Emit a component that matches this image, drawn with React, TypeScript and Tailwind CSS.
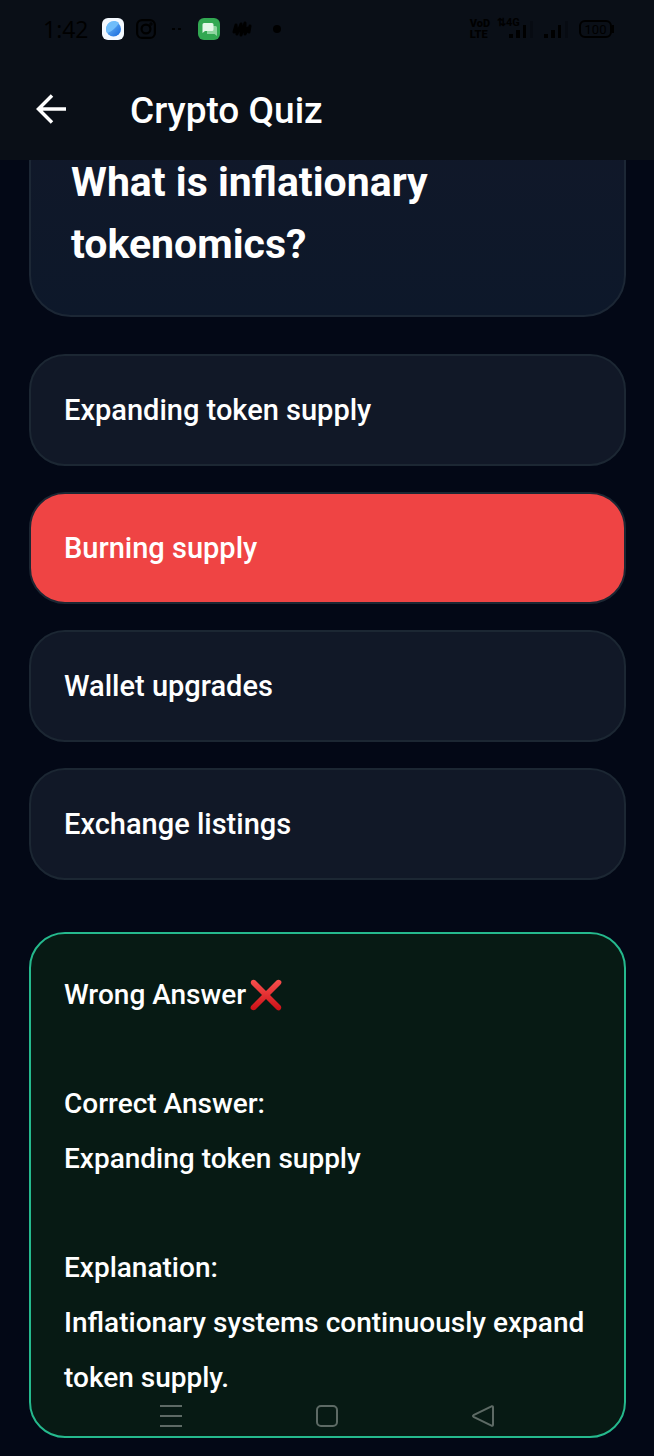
import { useState } from "react";

type Option = {
  id: number;
  label: string;
};

const options: Option[] = [
  { id: 1, label: "Expanding token supply" },
  { id: 2, label: "Burning supply" },
  { id: 3, label: "Wallet upgrades" },
  { id: 4, label: "Exchange listings" },
];

const CORRECT_ID = 1;

const SignalBars = () => (
  <svg width="25" height="18" viewBox="0 0 25 18" aria-hidden="true">
    <path d="M0 14h4v4H0zM7 10h4v8H7zM14 5h3v13h-3z" fill="#000" />
    <path d="M21 1h3v17h-3z" fill="#070b12" />
  </svg>
);

function StatusBar() {
  return (
    <div className="flex h-[58px] items-center justify-between pl-[43px] pr-10 text-black">
      <div className="flex items-center">
        <span className="w-[59px] font-['Open_Sans',sans-serif] text-[23px] leading-none">
          1:42
        </span>
        <svg width="22" height="22" viewBox="0 0 22 22" aria-hidden="true">
          <defs>
            <linearGradient id="browser" x1="0" y1="0" x2="1" y2="1">
              <stop offset="0" stopColor="#7cc4fb" />
              <stop offset="1" stopColor="#1467dc" />
            </linearGradient>
          </defs>
          <rect width="22" height="22" rx="6" fill="#f4f9ff" />
          <circle cx="11.500" cy="11" r="7.500" fill="url(#browser)" />
          <path d="M4 12C4 3 13 1 17 5c-3 5-8 9-12 10z" fill="#6fbdfa" />
        </svg>
        <svg
          className="ml-3"
          width="20"
          height="20"
          viewBox="0 0 18 18"
          fill="none"
          stroke="#000"
          strokeWidth="2"
          aria-hidden="true"
        >
          <rect x="1" y="1" width="16" height="16" rx="4.500" />
          <circle cx="9" cy="9" r="4" />
          <circle cx="13.500" cy="4.500" r="0.500" />
        </svg>
        <svg className="ml-4" width="10" height="4" aria-hidden="true">
          <path d="M0 1h3v2H0zM6 1h3v2H6z" fill="#000" />
        </svg>
        <svg
          className="ml-4"
          width="22"
          height="22"
          viewBox="0 0 22 22"
          aria-hidden="true"
        >
          <rect width="22" height="22" rx="6" fill="#32a852" />
          <path
            d="M9 8h8.500a1.500 1.500 0 0 1 1.500 1.500V18l-2.500-2H9z"
            fill="#8ed6a0"
          />
          <path
            d="M6 5h8a1.500 1.500 0 0 1 1.500 1.500v5A1.500 1.500 0 0 1 14 13H7l-2.500 2V6.500A1.500 1.500 0 0 1 6 5z"
            fill="#e3f7e8"
          />
        </svg>
        <svg
          className="ml-3"
          width="20"
          height="16"
          viewBox="0 0 20 16"
          fill="none"
          stroke="#000"
          strokeWidth="3"
          strokeLinecap="round"
          strokeLinejoin="round"
          aria-hidden="true"
        >
          <path d="M2 11 4 4M5 13 9 3M9 14 13 2M13 13 16 7M17 11 18 5M4 4 5 13M9 3v11M13 2v11" />
        </svg>
        <span className="ml-[21px] size-2 rounded-full bg-black" />
      </div>
      <div className="flex items-center font-['Roboto',sans-serif]">
        <span className="flex flex-col text-[11px] leading-[11px] font-black">
          <span>VoD</span>
          <span>LTE</span>
        </span>
        <span className="relative ml-[19px] flex">
          <SignalBars />
          <span className="absolute -top-1 -left-3 text-[11px] leading-[14px] font-bold whitespace-nowrap">
            ⇅4G
          </span>
        </span>
        <span className="ml-[10px] flex">
          <SignalBars />
        </span>
        <span className="ml-[10px] flex h-[18px] w-[33px] items-center justify-center rounded-[6px] border-2 border-black text-[13px] leading-none font-normal">
          100
        </span>
        <span className="h-2 w-[2px] bg-black" />
      </div>
    </div>
  );
}

function CrossMark() {
  return (
    <svg
      className="mb-1 ml-1 inline-block align-middle"
      width="32"
      height="32"
      viewBox="0 0 32 32"
      role="img"
      aria-label="wrong"
    >
      <defs>
        <linearGradient id="cross" x1="0" y1="0" x2="0" y2="1">
          <stop offset="0" stopColor="#f9504e" />
          <stop offset="1" stopColor="#cc1016" />
        </linearGradient>
      </defs>
      <path
        d="M1.500 1.500q2-1.500 4 0L16 12 26.500 1.500q2-1.500 4 0t0 4L20 16l10.500 10.500q1.500 2 0 4t-4 0L16 20 5.500 30.500q-2 1.500-4 0t0-4L12 16 1.500 5.500q-1.500-2 0-4z"
        fill="url(#cross)"
      />
    </svg>
  );
}

function SystemNav() {
  return (
    <nav
      aria-label="System"
      className="fixed inset-x-0 bottom-7 flex justify-center gap-[132px] text-[#5d6a65]"
    >
      <button type="button" aria-label="Recent apps">
        <svg width="24" height="24" viewBox="0 0 24 24" stroke="currentColor" strokeWidth="2">
          <path d="M1 2h22M1 12h22M1 22h22" />
        </svg>
      </button>
      <button type="button" aria-label="Home">
        <svg width="24" height="24" viewBox="0 0 24 24" fill="none" stroke="currentColor" strokeWidth="2">
          <rect x="2" y="2" width="20" height="20" rx="4" />
        </svg>
      </button>
      <button type="button" aria-label="Back">
        <svg width="24" height="24" viewBox="0 0 24 24" fill="none" stroke="currentColor" strokeWidth="2" strokeLinejoin="round">
          <path d="M2.500 11.200 20.500 2.300Q22 1.800 22 3.500V20.500Q22 22.200 20.500 21.700L2.500 12.800Q1.400 12 2.500 11.200z" />
        </svg>
      </button>
    </nav>
  );
}

export default function App() {
  const [selected, setSelected] = useState(2);
  const correct = options.find((option) => option.id === CORRECT_ID);

  return (
    <div className="min-h-screen bg-[#030816] font-['Roboto',sans-serif] font-medium text-white">
      <header className="sticky top-0 z-10 h-40 bg-[#0a0f17]">
        <StatusBar />
        <div className="flex h-[102px] items-center pl-9">
          <button type="button" aria-label="Go back">
            <svg
              width="30"
              height="30"
              viewBox="0 0 30 30"
              fill="none"
              stroke="currentColor"
              strokeWidth="3.500"
            >
              <path d="M30 15H3M16 1.500 2.500 15 16 28.500" />
            </svg>
          </button>
          <h1 className="ml-16 pt-1 text-[37px] leading-[48px]">Crypto Quiz</h1>
        </div>
      </header>

      <main className="-mt-[52px] pr-7 pb-[18px] pl-[29px]">
        <section className="rounded-[42px] border-2 border-[#1c2735] bg-linear-to-b from-[#111829] to-[#0d182a] px-10 pt-[41px] pb-10">
          <h2 className="text-[41px] leading-[62px] font-bold">
            What is inflationary tokenomics?
          </h2>
        </section>

        <div className="mt-[37px] flex flex-col gap-[26px]">
          {options.map((option) => (
            <button
              key={option.id}
              type="button"
              onClick={() => setSelected(option.id)}
              className={`h-28 rounded-[36px] border-2 border-[#1c2733] px-[33px] text-left text-[29px] leading-[40px] ${
                selected !== option.id
                  ? "bg-[#111827]"
                  : option.id === CORRECT_ID
                    ? "bg-[#10b981]"
                    : "bg-[#ef4444]"
              }`}
            >
              {option.label}
            </button>
          ))}
        </div>

        <section className="mt-[52px] space-y-[54px] rounded-[36px] border-2 border-[#25b98d] bg-[#071a14] px-[33px] pt-[33px] pb-[31px] text-[28px] leading-[55px]">
          <p>
            {selected === CORRECT_ID ? "Correct Answer" : "Wrong Answer"}
            {selected !== CORRECT_ID && <CrossMark />}
          </p>
          <p>
            Correct Answer:
            <br />
            {correct?.label}
          </p>
          <p>
            Explanation:
            <br />
            Inflationary systems continuously expand token supply.
          </p>
        </section>
      </main>

      <SystemNav />
    </div>
  );
}
